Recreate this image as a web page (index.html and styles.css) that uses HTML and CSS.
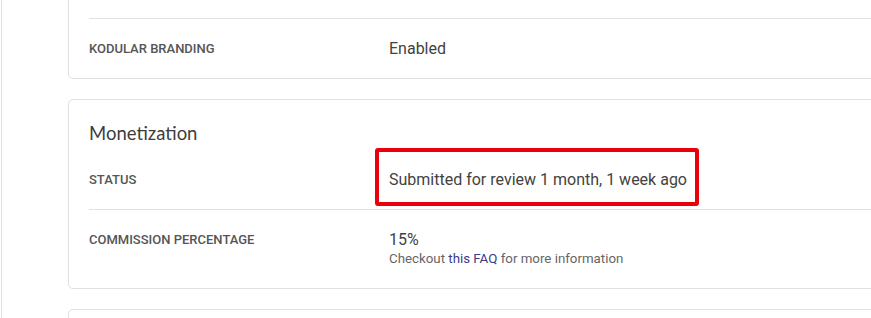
FILE: index.html
```html
<!DOCTYPE html>
<html lang="en">
<head>
    <meta charset="UTF-8">
    <meta name="viewport" content="width=device-width, initial-scale=1.0">
    <title>App Settings</title>
    <link rel="stylesheet" href="styles.css">
</head>
<body>
    <div class="layout">
        <div class="sidebar"></div>
        <div class="content">
            <div class="card card-top">
                <!-- previous row, scrolled out of view -->
                <div class="row row-hidden"></div>
                <div class="row">
                    <div class="label">KODULAR BRANDING</div>
                    <div class="value">Enabled</div>
                </div>
            </div>

            <div class="card">
                <h2 class="card-title">Monetization</h2>
                <div class="row row-first">
                    <div class="label">STATUS</div>
                    <div class="value">
                        <span class="highlight">Submitted for review 1 month, 1 week ago</span>
                    </div>
                </div>
                <div class="row">
                    <div class="label">COMMISSION PERCENTAGE</div>
                    <div class="value">
                        15%
                        <div class="hint">Checkout <a href="#">this FAQ</a> for more information</div>
                    </div>
                </div>
            </div>

            <div class="card card-empty"></div>
        </div>
    </div>
</body>
</html>
```

FILE: styles.css
```css
body {
    margin: 0;
    font-family: Roboto, "Liberation Sans", sans-serif;
    background: #fff;
    overflow: hidden;
    height: 100vh;
}
.layout {
    display: flex;
    height: 100%;
}
.sidebar {
    width: 1px;
    border-right: 1px solid #e2e2e2;
    flex-shrink: 0;
}
.content {
    padding-left: 66px;
    margin-top: -42px;
    display: flex;
    flex-direction: column;
    gap: 20px;
}
.card {
    width: 1000px;
    border: 1px solid #e0e0e0;
    border-radius: 5px;
    padding: 0 20px;
    box-sizing: border-box;
}
.card-empty {
    height: 60px;
    flex-shrink: 0;
}
.card-title {
    margin: 0 0 2px;
    padding-top: 18px;
    font-family: Lato, "Open Sans", sans-serif;
    font-weight: 400;
    font-size: 18.5px;
    line-height: 30px;
    color: #3d3d3d;
}
.row {
    display: flex;
    align-items: flex-start;
    padding: 20px 0;
    border-top: 1px solid #e0e0e0;
}
.row-hidden {
    min-height: 19px;
    border-top: none;
}
.row-first {
    border-top: none;
}
.label {
    width: 300px;
    flex-shrink: 0;
    font-size: 13px;
    font-weight: 500;
    color: #555;
    line-height: 19px;
}
.value {
    font-size: 16px;
    line-height: 19px;
    color: #424242;
}
.hint {
    margin-top: 1px;
    font-size: 13.3px;
    line-height: 18px;
    color: #666;
}
.hint a {
    color: #3b3a8c;
    text-decoration: none;
}
.highlight {
    position: relative;
}
.highlight::after {
    content: "";
    position: absolute;
    left: -14px;
    right: -12px;
    top: -22px;
    bottom: -17px;
    border: 4px solid #e8000b;
    border-radius: 3px;
}
```
